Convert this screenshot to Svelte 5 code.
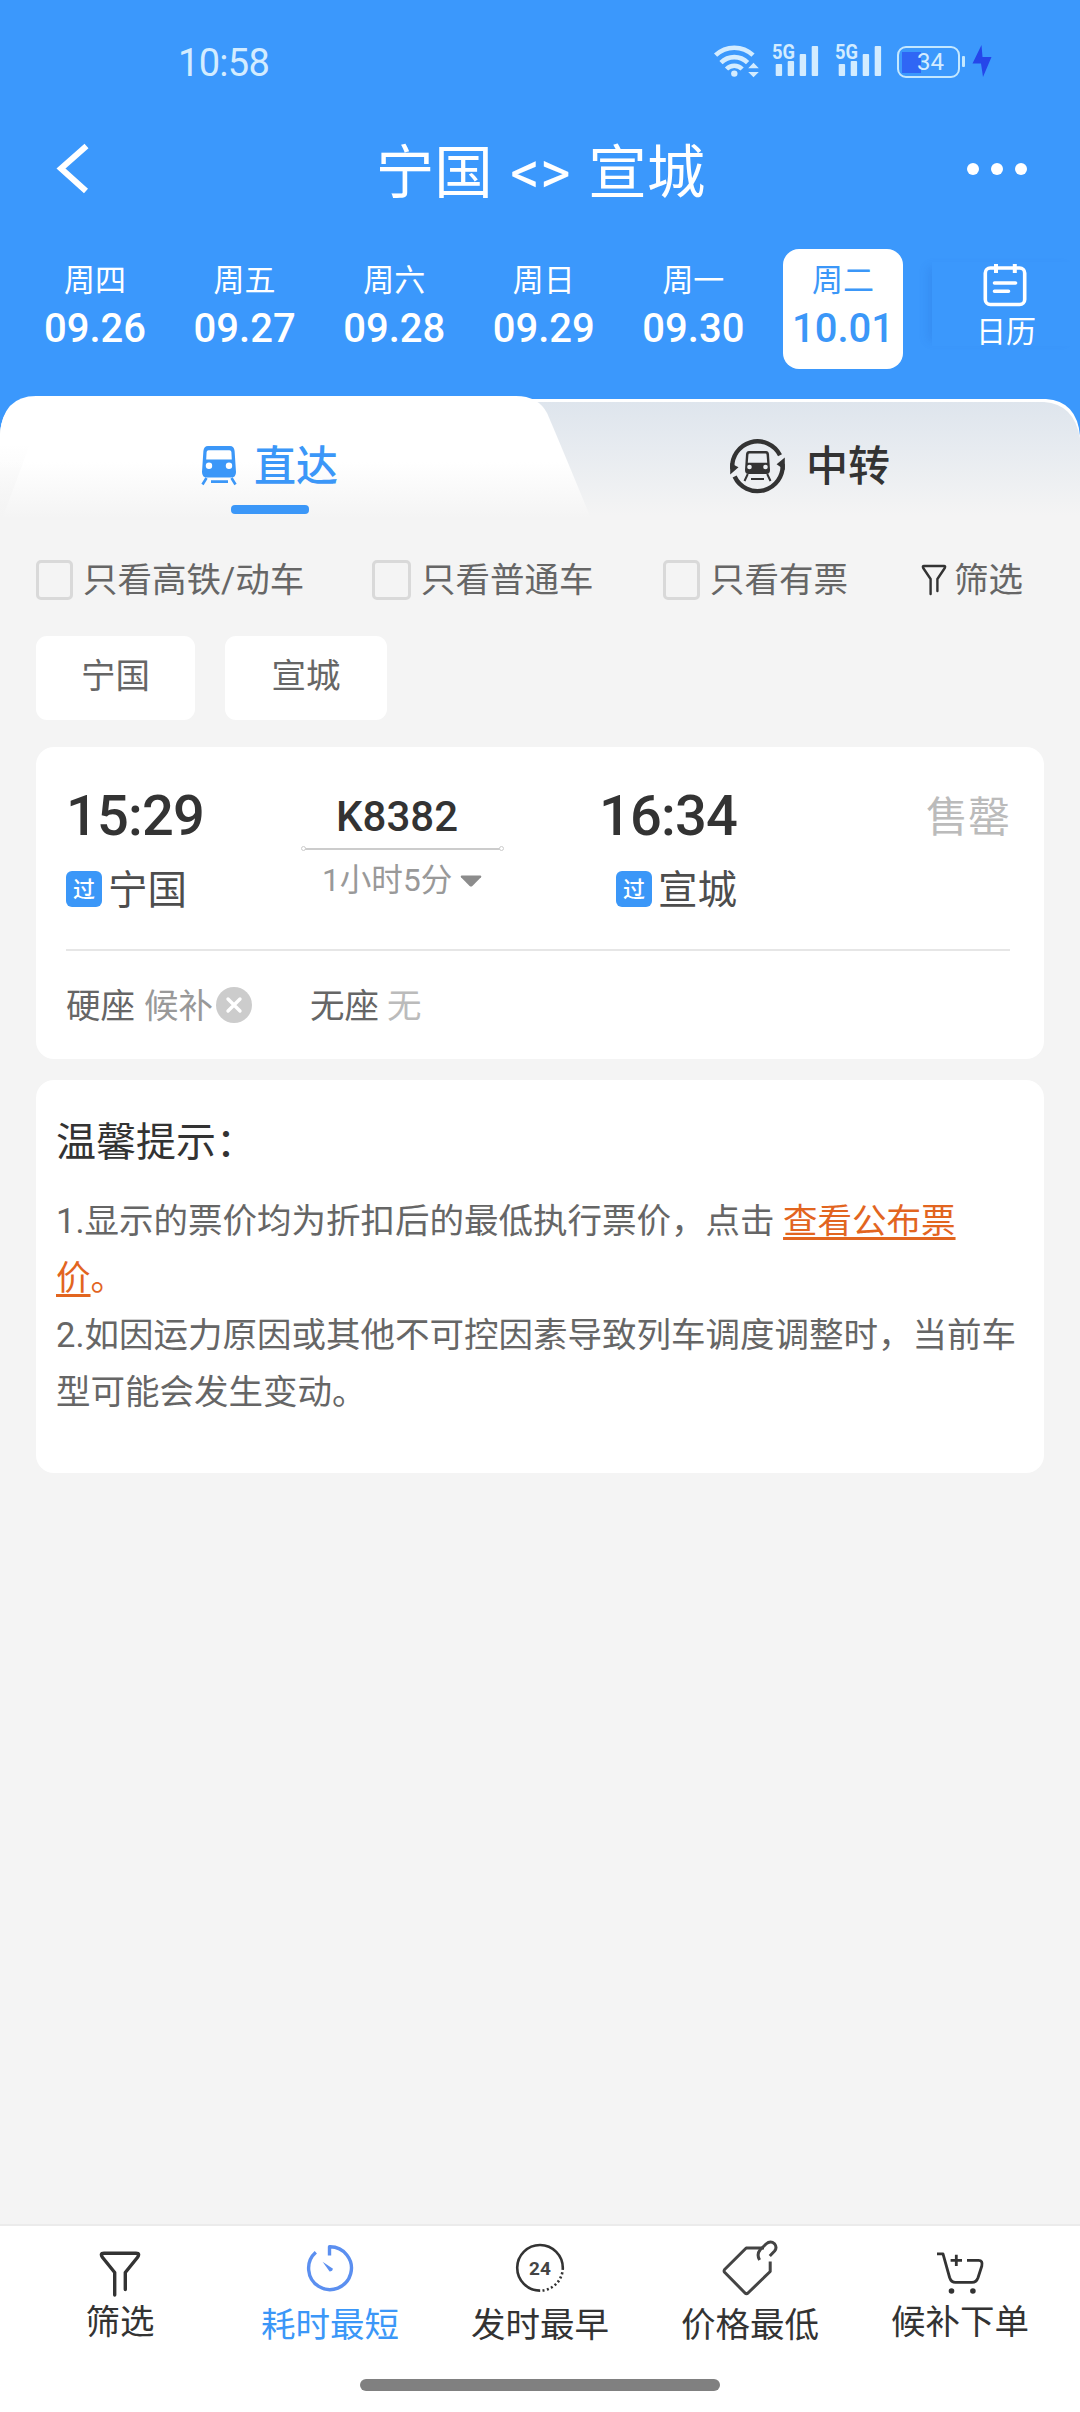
<script lang="ts">
  interface Day {
    week: string;
    date: string;
  }

  const days: Day[] = [
    { week: '周四', date: '09.26' },
    { week: '周五', date: '09.27' },
    { week: '周六', date: '09.28' },
    { week: '周日', date: '09.29' },
    { week: '周一', date: '09.30' },
    { week: '周二', date: '10.01' }
  ];

  const stations = ['宁国', '宣城'];

  let selectedDate = $state('10.01');
  let sort = $state('duration');
  let onlyFast = $state(false);
  let onlyNormal = $state(false);
  let onlyAvailable = $state(false);
</script>

<div class="page">
  <header>
    <div class="status-bar">
      <span class="clock">10:58</span>
      <div class="status-icons">
        <svg class="wifi" width="50" height="40" viewBox="0 0 50 40">
          <g fill="none" stroke="currentColor" stroke-width="4.6">
            <path d="M3.6 15.2A27 27 0 0 1 41 15.2" />
            <path d="M9 22.6A19 19 0 0 1 35.6 22.6" />
            <path d="M14.5 29A11 11 0 0 1 30.1 29" />
          </g>
          <circle cx="22.3" cy="33.6" r="3.2" fill="currentColor" />
          <path d="M41.5 22.8l5.3 5.4H36.2zM41.5 37.2l5.3-5.2H36.2z" fill="currentColor" />
        </svg>
        {#each [1, 2] as sim (sim)}
          <svg class="signal" width="47" height="40" viewBox="0 0 47 40" fill="currentColor">
            <text x="0" y="19.3" font-size="21" font-weight="700" textLength="23" lengthAdjust="spacingAndGlyphs">5G</text>
            <rect x="3.7" y="24" width="6.4" height="12" rx="1" />
            <rect x="15.7" y="21" width="6.4" height="15" rx="1" />
            <rect x="27.7" y="14" width="6.4" height="22" rx="1" />
            <rect x="39.7" y="6" width="6.4" height="30" rx="1" />
          </svg>
        {/each}
        <div class="battery"><span>34</span></div>
        <svg class="bolt" width="22" height="34" viewBox="0 0 22 34">
          <path d="M10.5 1L1.5 19.5h8.5L12 33l8.5-20H11.5z" fill="#2546ea" />
        </svg>
      </div>
    </div>

    <div class="title-bar">
      <button class="back" aria-label="返回">
        <svg width="36" height="52" viewBox="0 0 36 52">
          <path d="M32.5 3L7 25.5L32 48" fill="none" stroke="#fff" stroke-width="6" />
        </svg>
      </button>
      <h1>宁国 &lt;&gt; 宣城</h1>
      <button class="more" aria-label="更多">
        <i></i><i></i><i></i>
      </button>
    </div>

    <div class="date-bar">
      <div class="days">
        {#each days as day (day.date)}
          <button class="day" class:selected={selectedDate === day.date} onclick={() => (selectedDate = day.date)}>
            <span class="week">{day.week}</span>
            <span class="date">{day.date}</span>
          </button>
        {/each}
      </div>
      <button class="calendar">
        <svg width="44" height="44" viewBox="0 0 44 44" fill="none" stroke="#fff" stroke-linecap="round">
          <rect x="2.3" y="5" width="39.4" height="36.5" rx="5" stroke-width="3.6" />
          <path d="M13 1v9M31.8 1v9" stroke-width="4" stroke-linecap="butt" />
          <path d="M11.5 20h21M11.5 28.3h14" stroke-width="3.6" />
        </svg>
        <span>日历</span>
      </button>
    </div>
  </header>

  <nav class="tabs">
    <svg class="tabs-bg" width="1080" height="132" viewBox="0 0 1080 132">
      <defs>
        <linearGradient id="transfer-fill" x1="0" y1="0" x2="0" y2="1">
          <stop offset="0" stop-color="#dee5ed" />
          <stop offset="0.9" stop-color="#f4f4f4" />
        </linearGradient>
        <linearGradient id="direct-fill" x1="0" y1="0" x2="0" y2="1">
          <stop offset="0.5" stop-color="#fff" />
          <stop offset="0.93" stop-color="#f4f4f4" />
        </linearGradient>
        <linearGradient id="edge-fill" x1="0" y1="0" x2="0" y2="1">
          <stop offset="0" stop-color="#f4f4f4" stop-opacity="0" />
          <stop offset="1" stop-color="#f4f4f4" />
        </linearGradient>
      </defs>
      <path d="M0 132V36Q3 3 36 3H1046Q1077 5 1080 40V132z" fill="#fff" />
      <path d="M0 132V36Q3 6 36 6H1044Q1074 8 1080 42V132z" fill="url(#transfer-fill)" />
      <path d="M0 132V38Q3 0 36 0H516Q538 0 547 17Q552 28 590 120V132z" fill="url(#direct-fill)" />
      <path d="M0 48H30L4 118L0 132z" fill="url(#edge-fill)" />
    </svg>
    <button class="tab direct">
      <svg width="40" height="44" viewBox="0 0 40 44">
        <path
          fill-rule="evenodd"
          fill="#3b97f8"
          d="M8 2H30Q34 2 34.6 7L36 28Q36 33.5 31 33.5H7Q2 33.5 2 28L3.4 7Q4 2 8 2zM8.5 6.3Q6.8 6.3 6.6 8L6.2 15.6H31.8L31.4 8Q31.2 6.3 29.5 6.3z"
        />
        <circle cx="9" cy="21.8" r="3.2" fill="#fff" />
        <circle cx="29" cy="21.8" r="3.2" fill="#fff" />
        <path d="M6.5 34L2.5 40.5M31.5 34L35.5 40.5M11 37.6H28" stroke="#3b97f8" stroke-width="2.6" />
      </svg>
      <span>直达</span>
    </button>
    <button class="tab transfer">
      <svg width="57" height="57" viewBox="0 0 57 57">
        <g fill="none" stroke="#333" stroke-width="4.4">
          <path d="M3.4 31A25.2 25.2 0 0 1 51 17.2" />
          <path d="M5.6 38.5A25.2 25.2 0 0 0 53.6 26" />
        </g>
        <path d="M1.2 36.5V25L9.5 29.3zM55.8 19.5V32L47.6 26.3z" fill="#333" />
        <path
          fill-rule="evenodd"
          fill="#333"
          d="M20 13H37Q39.6 13 40 16L41 32Q41 36 37.5 36H19.5Q16 36 16 32L17 16Q17.4 13 20 13zM20.6 15.6Q19.4 15.6 19.4 17L18.8 24.8H38.2L37.6 17Q37.6 15.6 36.4 15.6z"
        />
        <circle cx="20.5" cy="29" r="2.3" fill="#edf0f3" />
        <circle cx="36.5" cy="29" r="2.3" fill="#edf0f3" />
        <path d="M18.8 36L15.5 43M38.2 36L41.5 43M22 41H35" stroke="#333" stroke-width="2" />
      </svg>
      <span>中转</span>
    </button>
  </nav>

  <div class="filters">
    <label class="fast"><input type="checkbox" bind:checked={onlyFast} /><span>只看高铁/动车</span></label>
    <label class="normal"><input type="checkbox" bind:checked={onlyNormal} /><span>只看普通车</span></label>
    <label class="available"><input type="checkbox" bind:checked={onlyAvailable} /><span>只看有票</span></label>
    <button class="filter">
      <svg width="26" height="32" viewBox="0 0 26 32" fill="none" stroke="#333" stroke-width="2.4" stroke-linecap="round" stroke-linejoin="round">
        <path d="M9.6 30V15L2.2 4Q1.2 2 3 2H23Q24.8 2 23.8 4L16.4 15V27" />
      </svg>
      <span>筛选</span>
    </button>
  </div>

  <div class="stations">
    {#each stations as station (station)}
      <button>{station}</button>
    {/each}
  </div>

  <section class="card train">
    <div class="trip">
      <div class="stop">
        <div class="time">15:29</div>
        <div class="station"><span class="badge">过</span>宁国</div>
      </div>
      <div class="middle">
        <div class="number">K8382</div>
        <div class="line"></div>
        <div class="duration">
          1小时5分
          <svg width="22" height="12" viewBox="0 0 22 12"><path d="M1.5 0.5H20.5Q22 1 21 2.2L12.4 11Q11 12 9.6 11L1 2.2Q0 1 1.5 0.5z" fill="#8c8c8c" /></svg>
        </div>
      </div>
      <div class="stop arrive">
        <div class="time">16:34</div>
        <div class="station"><span class="badge">过</span>宣城</div>
      </div>
      <div class="sold-out">售罄</div>
    </div>
    <div class="seats">
      <span class="seat">硬座</span>
      <span class="waitlist">候补</span>
      <svg width="36" height="36" viewBox="0 0 36 36">
        <circle cx="18" cy="18" r="18" fill="#ccc" />
        <path d="M12 12l12 12M24 12l-12 12" stroke="#fff" stroke-width="3.4" stroke-linecap="round" />
      </svg>
      <span class="seat standing">无座</span>
      <span class="none">无</span>
    </div>
  </section>

  <section class="card tips">
    <h2>温馨提示：</h2>
    <p>1.显示的票价均为折扣后的最低执行票价，点击 <a href="#fares">查看公布票<br />价</a><span class="stop-mark">。</span></p>
    <p>2.如因运力原因或其他不可控因素导致列车调度调整时，当前车<br />型可能会发生变动。</p>
  </section>

  <footer>
    <div class="actions">
      <button class="raised">
        <svg width="60" height="60" viewBox="0 0 60 60" fill="none" stroke="#333" stroke-width="3.4" stroke-linecap="round" stroke-linejoin="round">
          <path d="M24.7 55V32.5L12.6 17.5Q9.6 13.2 14 13.2H46Q50.4 13.2 47.4 17.5L35.3 32.5V49.5" />
        </svg>
        <span>筛选</span>
      </button>
      <button class:active={sort === 'duration'} onclick={() => (sort = 'duration')}>
        <svg width="60" height="60" viewBox="0 0 60 60" fill="none" stroke="#5b8ff0" stroke-width="3.4">
          <path d="M29.5 15.5V6.8A21.4 21.4 0 1 1 15.8 12.2" stroke-linejoin="round" />
          <path d="M22.6 21.8L33 28.8Q32.6 31.6 29.6 31.4z" fill="#5b8ff0" stroke="none" />
        </svg>
        <span>耗时最短</span>
      </button>
      <button class:active={sort === 'departure'} onclick={() => (sort = 'departure')}>
        <svg width="60" height="60" viewBox="0 0 60 60" fill="none" stroke="#333" stroke-width="2.6">
          <path d="M30 50.6A22.8 22.8 0 1 1 52.8 28" />
          <path d="M52.8 28A22.8 22.8 0 0 1 30 50.6" stroke-dasharray="2 2.4" />
          <text x="30" y="35" text-anchor="middle" font-size="19" font-weight="700" fill="#444" stroke="none">24</text>
        </svg>
        <span>发时最早</span>
      </button>
      <button class:active={sort === 'price'} onclick={() => (sort = 'price')}>
        <svg width="60" height="60" viewBox="0 0 60 60" fill="none" stroke="#444" stroke-width="3" stroke-linejoin="round">
          <path d="M44 8H26.2L4.6 29.5Q3.6 31 4.6 32.2L25 53Q26.5 54.2 28 53L50.2 31.5V21.5" />
          <path d="M39.6 20Q36.4 14.4 40 10L46 4Q50.5 0 54.6 3.8Q57.4 7.4 54.6 11L49.8 16" />
        </svg>
        <span>价格最低</span>
      </button>
      <button class="raised">
        <svg width="60" height="60" viewBox="0 0 60 60" fill="none" stroke="#333" stroke-width="2.8" stroke-linejoin="round">
          <path d="M7 13.8H13L19.6 37.5Q21.2 42.4 25.5 42.4H42Q46.4 42.4 48 37.8L51.8 26Q53 20.4 48.6 20.4H37M26.3 14.8V26M20.6 20.4H32" />
          <circle cx="21.5" cy="51" r="2.8" fill="#333" stroke="none" />
          <circle cx="42.9" cy="51" r="2.8" fill="#333" stroke="none" />
        </svg>
        <span>候补下单</span>
      </button>
    </div>
    <div class="home-indicator"></div>
  </footer>
</div>

<style>
  :global(body) {
    background: #f4f4f4;
  }

  .page {
    display: flex;
    flex-direction: column;
    width: 1080px;
    height: 2412px;
    overflow: hidden;
    background: #f4f4f4;
    color: #333;
    font-family: Roboto, 'Noto Sans CJK SC', sans-serif;
    font-size: 34.5px;
  }

  button {
    margin: 0;
    padding: 0;
    border: 0;
    background: none;
    color: inherit;
    font: inherit;
    cursor: pointer;
  }

  svg {
    display: block;
    flex: none;
  }

  header {
    flex: none;
    height: 396px;
    background: #3b98fc;
    color: #fff;
  }

  .status-bar {
    display: flex;
    justify-content: space-between;
    height: 84px;
    padding: 40px 87px 0 178px;
    box-sizing: border-box;
    color: #d3ecff;
  }

  .clock {
    font-size: 38px;
    line-height: 46px;
    letter-spacing: -0.7px;
  }

  .status-icons {
    display: flex;
    align-items: flex-start;
  }

  .wifi {
    margin-right: 10px;
  }

  .signal {
    margin-right: 16px;
  }

  .battery {
    position: relative;
    width: 63px;
    height: 32px;
    margin: 6px 11px 0 -1px;
    box-sizing: border-box;
    border: 2.5px solid #c4e8ff;
    border-radius: 9px;
    background: linear-gradient(#2f66f5, #2f66f5) 3px center / 19px 21px no-repeat;
    text-align: center;
    font-size: 24px;
    line-height: 28px;
  }

  .battery::after {
    content: '';
    position: absolute;
    top: 8px;
    right: -7px;
    width: 3px;
    height: 11px;
    border-radius: 1px;
    background: #c4e8ff;
  }

  .battery span {
    padding-left: 4px;
  }

  .bolt {
    margin-top: 4px;
  }

  .title-bar {
    display: flex;
    align-items: center;
    justify-content: space-between;
    height: 165px;
    padding: 4px 53px 0 54px;
    box-sizing: border-box;
  }

  h1 {
    margin: 8px 0 0;
    font-size: 58.5px;
    font-weight: 400;
    line-height: 70px;
    word-spacing: 3px;
  }

  .back {
    width: 60px;
  }

  .more {
    display: flex;
    gap: 12px;
  }

  .more i {
    width: 12px;
    height: 12px;
    border-radius: 50%;
    background: #fff;
  }

  .date-bar {
    display: flex;
    align-items: flex-start;
  }

  .days {
    display: flex;
    gap: 29.6px;
    padding-left: 35px;
  }

  .day {
    display: flex;
    flex-direction: column;
    align-items: center;
    width: 120px;
    height: 120px;
    padding-top: 13px;
    box-sizing: border-box;
    border-radius: 16px;
  }

  .day.selected {
    background: #fff;
    color: #3b97f8;
  }

  .week {
    font-size: 31px;
    line-height: 38px;
  }

  .date {
    margin-top: 6px;
    font-size: 40px;
    font-weight: 500;
    line-height: 46px;
  }

  .calendar {
    display: flex;
    flex-direction: column;
    align-items: center;
    width: 148px;
    height: 84px;
    margin: 13px 0 0 29px;
    box-shadow: -9px 0 9px -5px rgba(30, 90, 190, 0.16);
  }

  .calendar svg {
    margin: 1px 0 0 -2px;
  }

  .calendar span {
    margin-top: 3px;
    font-size: 30px;
    line-height: 44px;
  }

  .tabs {
    position: relative;
    display: flex;
    flex: none;
    height: 132px;
    background: linear-gradient(#3b98fc 60px, #f4f4f4 60px);
  }

  .tabs-bg {
    position: absolute;
    inset: 0;
  }

  .tab {
    position: relative;
    display: flex;
    align-items: center;
    height: 140px;
    font-size: 42px;
    font-weight: 500;
    line-height: 60px;
  }

  .tab span {
    padding-top: 2px;
  }

  .direct {
    gap: 14px;
    width: 540px;
    padding-left: 200px;
    color: #3b97f8;
  }

  .direct::after {
    content: '';
    position: absolute;
    left: 231px;
    bottom: 22px;
    width: 78px;
    height: 9px;
    border-radius: 4px;
    background: #3b97f8;
  }

  .transfer {
    gap: 20px;
    padding-left: 189px;
  }

  .filters {
    display: flex;
    flex: none;
    align-items: center;
    height: 104px;
    padding-left: 36px;
    color: #666;
    white-space: nowrap;
  }

  .filters label,
  .filter {
    display: flex;
    align-items: center;
  }

  .filters label {
    gap: 10px;
  }

  .filters span {
    line-height: 48px;
  }

  .fast {
    width: 336px;
  }

  .normal {
    width: 291px;
  }

  .available {
    width: 258px;
  }

  input {
    width: 37px;
    height: 40px;
    margin: 0;
    box-sizing: border-box;
    border: 3px solid #d9d9d9;
    border-radius: 5px;
    appearance: none;
  }

  .normal input {
    width: 39px;
  }

  input:checked {
    background: #3b97f8;
  }

  .filter {
    gap: 7px;
  }

  .stations {
    display: flex;
    flex: none;
    gap: 30px;
    padding: 4px 36px 0;
    color: #666;
  }

  .stations button {
    width: 159px;
    height: 84px;
    padding-bottom: 11px;
    border-radius: 11px;
    background: #fff;
  }

  .stations button:last-child {
    width: 162px;
  }

  .card {
    flex: none;
    margin: 0 36px;
    box-sizing: border-box;
    border-radius: 18px;
    background: #fff;
  }

  .train {
    height: 312px;
    margin-top: 27px;
    padding: 0 34px 0 30px;
  }

  .trip {
    display: flex;
    height: 204px;
    padding-top: 34px;
    box-sizing: border-box;
    border-bottom: 2px solid #e6e6e6;
  }

  .stop {
    width: 233px;
    padding-top: 2px;
  }

  .time {
    font-size: 56px;
    font-weight: 500;
    line-height: 66px;
    letter-spacing: -0.8px;
  }

  .station {
    display: flex;
    align-items: center;
    gap: 6px;
    margin-top: 12px;
    color: #4d4d4d;
    font-size: 39.5px;
    line-height: 60px;
  }

  .badge {
    width: 36px;
    height: 36px;
    margin-top: -4px;
    border-radius: 6px;
    background: #3b97f8;
    color: #fff;
    font-size: 22px;
    font-weight: 500;
    line-height: 37px;
    text-align: center;
  }

  .middle {
    width: 205px;
    padding-top: 11px;
  }

  .number {
    padding-right: 9px;
    font-size: 42px;
    font-weight: 500;
    line-height: 50px;
    text-align: center;
  }

  .line {
    position: relative;
    height: 2px;
    margin: 6px 0 0 6px;
    width: 195px;
    background: #ccc;
  }

  .line::before,
  .line::after {
    content: '';
    position: absolute;
    top: -2px;
    width: 3px;
    height: 3px;
    border: 1.5px solid #ccc;
    border-radius: 50%;
    background: #fff;
  }

  .line::before {
    left: -4px;
  }

  .line::after {
    right: -4px;
  }

  .duration {
    display: flex;
    align-items: center;
    gap: 8px;
    margin-top: 7px;
    padding-left: 23px;
    color: #999;
    font-size: 31.6px;
    line-height: 48px;
    white-space: nowrap;
  }

  .arrive {
    text-align: right;
  }

  .arrive .station {
    justify-content: flex-end;
  }

  .sold-out {
    margin-left: auto;
    color: #bbb;
    font-size: 42px;
    line-height: 74px;
  }

  .seats {
    display: flex;
    align-items: center;
    height: 108px;
    color: #999;
  }

  .seats span {
    padding-bottom: 4px;
  }

  .seat {
    color: #666;
  }

  .waitlist {
    margin: 0 3px 0 9px;
  }

  .standing {
    margin: 0 8px 0 58px;
  }

  .none {
    color: #bbb;
  }

  .tips {
    height: 393px;
    margin-top: 21px;
    padding: 31px 20px 0;
  }

  h2 {
    margin: 0 0 19px;
    font-size: 40px;
    font-weight: 400;
    line-height: 63px;
  }

  p {
    margin: 0;
    color: #666;
    line-height: 57px;
    white-space: nowrap;
  }

  a,
  .stop-mark {
    color: #e2651f;
  }

  a {
    text-decoration-thickness: 3px;
    text-underline-offset: 4px;
  }

  footer {
    height: 188px;
    margin-top: auto;
    box-sizing: border-box;
    border-top: 2px solid #ebebeb;
    background: #fff;
  }

  .actions {
    display: grid;
    grid-template-columns: repeat(5, 210px);
    justify-content: center;
    height: 159px;
  }

  .actions button {
    display: flex;
    flex-direction: column;
    align-items: center;
    padding-top: 14px;
  }

  .actions span {
    line-height: 50px;
  }

  .actions .raised span {
    margin-top: -3px;
  }

  .active {
    color: #3b97f8;
  }

  .home-indicator {
    width: 360px;
    height: 12px;
    margin: 0 auto;
    border-radius: 6px;
    background: #808080;
    margin-top: 0;
  }

  .actions {
    height: 153px;
  }
</style>
